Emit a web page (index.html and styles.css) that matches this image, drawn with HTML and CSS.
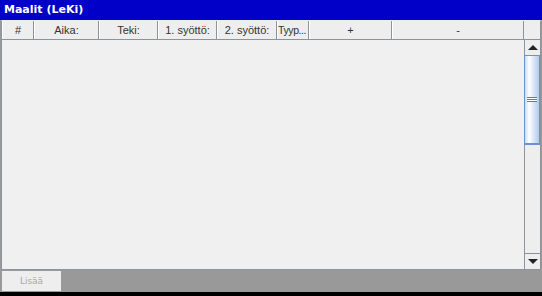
FILE: index.html
```html
<!DOCTYPE html>
<html>
<head>
<meta charset="utf-8">
<link rel="stylesheet" href="styles.css">
</head>
<body>
<div class="window">
  <div class="title">Maalit (LeKi)</div>
  <div class="pane">
    <div class="header">
      <div class="hcell w1">#</div>
      <div class="hcell w2">Aika:</div>
      <div class="hcell w3">Teki:</div>
      <div class="hcell w4">1. syöttö:</div>
      <div class="hcell w5">2. syöttö:</div>
      <div class="hcell w6 left">Tyyp...</div>
      <div class="hcell w7">+</div>
      <div class="hcell w8">-</div>
      <div class="corner"></div>
    </div>
    <div class="body">
      <div class="rows"></div>
      <div class="vscroll">
        <div class="sbtn up"><span class="tri-up"></span></div>
        <div class="track">
          <div class="thumb"><span class="grip"></span></div>
        </div>
        <div class="sbtn down"><span class="tri-down"></span></div>
      </div>
    </div>
  </div>
  <div class="footer">
    <div class="btn">Lisää</div>
  </div>
  <div class="bottom"></div>
</div>
</body>
</html>
```
FILE: styles.css
```css
* { box-sizing: border-box; }
html, body { margin: 0; padding: 0; }
body { width: 542px; height: 296px; overflow: hidden; background: #999999; }
.window {
  width: 542px; height: 296px;
  display: flex; flex-direction: column;
  background: #999999;
  font-family: "DejaVu Sans", "Liberation Sans", sans-serif;
}
.title {
  height: 20px; flex: none; background: #0000c8; color: #ffffff;
  font-weight: bold; font-size: 11px; line-height: 19px; padding-left: 4px;
}
.pane {
  flex: none;
  margin: 0 1px 0 1px;
  height: 250px;
  border: 1px solid #8b939c;
  border-top: 1px solid #eeeeee;
  background: #f0f0f0;
  display: flex; flex-direction: column;
}
.header {
  height: 19px; display: flex; flex: none;
  border-bottom: 1px solid #8b939c;
}
.hcell {
  height: 18px; background: #eeeeee;
  border-right: 1px solid #8b939c;
  border-left: 1px solid #ffffff;
  font-family: "Liberation Sans", "DejaVu Sans", sans-serif;
  font-size: 11px; color: #333333; text-align: center; line-height: 18px;
  white-space: nowrap; overflow: hidden;
}
.hcell.left { text-align: left; padding-left: 0; font-size: 10.5px; letter-spacing: -0.4px; }
.w1 { width: 32px; }
.w2 { width: 65px; }
.w3 { width: 59px; }
.w4 { width: 59px; }
.w5 { width: 60px; }
.w6 { width: 32px; }
.w7 { width: 83px; }
.w8 { width: 132px; }
.corner { flex: 1; background: #eeeeee; }
.body { flex: 1; display: flex; }
.rows { flex: 1; }
.vscroll {
  width: 16px; display: flex; flex-direction: column;
  background: #eeeeee; border-left: 1px solid #8b939c;
}
.sbtn {
  height: 15px; background: #eeeeee; flex: none;
  display: flex; align-items: center; justify-content: center;
}
.sbtn.down { border-top: 1px solid #8b939c; height: 16px; }
.tri-up {
  width: 0; height: 0;
  border-left: 5px solid transparent; border-right: 5px solid transparent;
  border-bottom: 5px solid #222222;
}
.tri-down {
  width: 0; height: 0;
  border-left: 5px solid transparent; border-right: 5px solid transparent;
  border-top: 5px solid #222222;
}
.track { flex: 1; background: #eeeeee; }
.thumb {
  height: 90px; margin-left: -1px;
  border: 1px solid #6f8fd0;
  border-bottom: 2px solid #6f8fd0;
  background: linear-gradient(to right, #c9dbf2 0%, #ffffff 30%, #dde8f6 60%, #b3cae8 100%);
  display: flex; align-items: center; justify-content: center;
}
.grip {
  width: 10px; height: 5px;
  background: linear-gradient(to bottom, #5577cc 0 1px, #ffffff 1px 2px, #5577cc 2px 3px, #ffffff 3px 4px, #5577cc 4px 5px);
}
.footer { height: 22px; flex: none; padding: 1px 0 1px 2px; display: flex; }
.btn {
  width: 59px; height: 20px; background: #eeeeee; color: #a8a8a8;
  font-size: 9px; text-align: center; line-height: 20px;
}
.bottom { height: 4px; flex: none; background: #000000; }
```
